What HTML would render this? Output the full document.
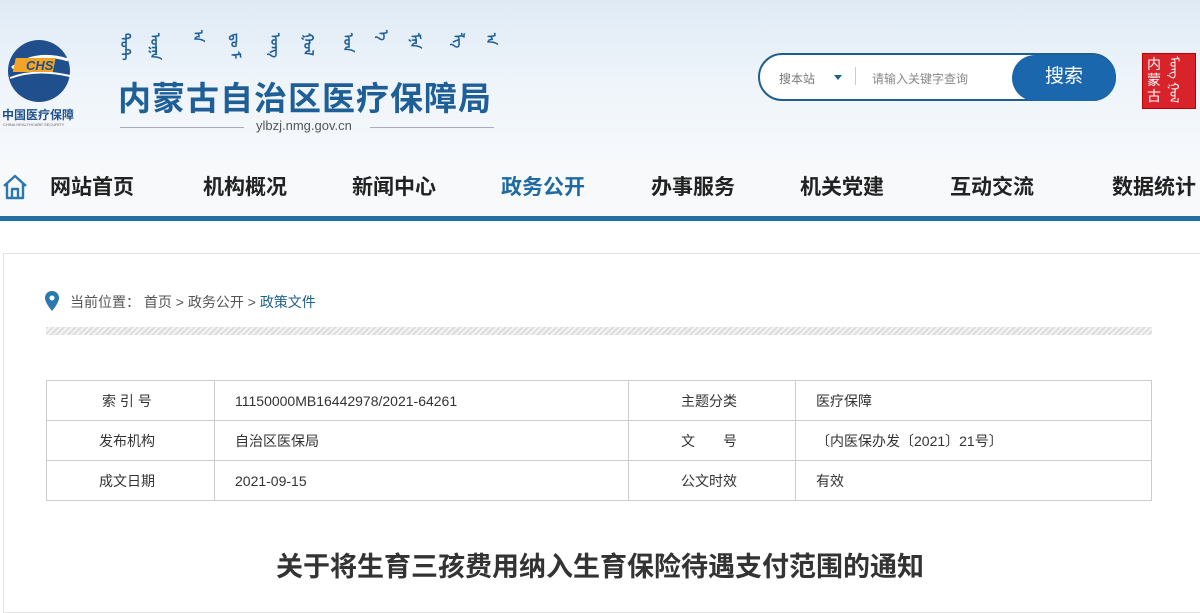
<!DOCTYPE html>
<html><head><meta charset="utf-8"><style>
*{margin:0;padding:0;box-sizing:border-box}
body{width:1200px;height:608px;overflow:hidden;background:#fff;font-family:"Liberation Sans","Noto Sans CJK SC",sans-serif;position:relative}
.hdr{position:absolute;left:0;top:0;width:1200px;height:160px;background:linear-gradient(180deg,#dfeaf5 0%,#eef4fa 50%,#f6f9fc 100%)}
.nav{position:absolute;top:160px;left:0;width:1200px;height:56px;background:#f7f9fb}
.navline{position:absolute;top:216px;left:0;width:1200px;height:5px;background:#2270a3}
.nav span{position:absolute;top:11px;font-size:21px;font-weight:bold;color:#222}
.abs{position:absolute}
.mg{position:absolute;top:33px;writing-mode:vertical-lr;font-size:13px;font-weight:bold;color:#1f5f97;line-height:10px}
.box{position:absolute;left:3px;top:253px;width:1197px;height:360px;border:1px solid #e3e3e3;border-right:none}
table{position:absolute;left:46px;top:380px;border-collapse:collapse;font-size:14px;color:#333}
td{border:1px solid #ccc;height:40px;padding:0 0 0 20px}
</style></head><body>
<div class="hdr"></div>
<svg class="abs" style="left:6px;top:38px" width="66" height="66" viewBox="0 0 66 66">
<circle cx="33" cy="33" r="31" fill="#1f4f8c"/>
<path d="M6 30 Q30 12 62 22" stroke="#fff" stroke-width="3" fill="none"/>
<path d="M4 40 Q30 30 64 38" stroke="#fff" stroke-width="2" fill="none"/>
<rect x="14" y="20" width="40" height="14" fill="#f2a428" transform="skewX(-12)"/>
<text x="20" y="32" font-size="13" font-weight="bold" fill="#1f4f8c" font-style="italic" font-family="Liberation Sans">CHS</text>
</svg>
<div class="abs" style="left:2px;top:106px;font-size:12px;font-weight:bold;color:#1f4f8c">中国医疗保障</div>
<div class="abs" style="left:3px;top:122px;font-size:4px;color:#666">CHINA HEALTHCARE SECURITY</div>
<div class="mg" style="left:120px">ᠳᠣᠲ</div><div class="mg" style="left:150px">ᠣᠭᠠ</div><div class="mg" style="left:193px;top:30px">ᠠ</div><div class="mg" style="left:230px">ᠳᠤ ᠮ</div><div class="mg" style="left:270px">ᠣᠩ</div><div class="mg" style="left:303px">ᠭᠣᠯ</div><div class="mg" style="left:343px">ᠤᠨ</div><div class="mg" style="left:378px;top:30px">ᠡ</div><div class="mg" style="left:410px">ᠮᠨᠡ</div><div class="mg" style="left:453px">ᠯᠭ</div><div class="mg" style="left:486px">ᠡᠨ</div>
<div class="abs" style="left:118px;top:72px;font-size:33px;font-weight:bold;color:#1f5f97;letter-spacing:1px">内蒙古自治区医疗保障局</div>
<div class="abs" style="left:120px;top:127px;width:124px;height:1px;background:#aab"></div>
<div class="abs" style="left:370px;top:127px;width:124px;height:1px;background:#aab"></div>
<div class="abs" style="left:256px;top:118px;font-size:13px;color:#555">ylbzj.nmg.gov.cn</div>
<div class="abs" style="left:758px;top:53px;width:358px;height:48px;border:2px solid #1f5f8c;border-radius:24px;background:#fff"></div>
<div class="abs" style="left:779px;top:70px;font-size:12px;color:#777">搜本站</div>
<div class="abs" style="left:834px;top:75px;width:0;height:0;border-left:4px solid transparent;border-right:4px solid transparent;border-top:5px solid #1f5f8c"></div>
<div class="abs" style="left:855px;top:67px;width:1px;height:18px;background:#ccc"></div>
<div class="abs" style="left:872px;top:70px;font-size:12px;color:#888">请输入关键字查询</div>
<div class="abs" style="left:1012px;top:55px;width:104px;height:46px;border-radius:23px;background:#1a67ae;color:#fff;font-size:19px;text-align:center;line-height:44px">搜索</div>
<div class="abs" style="left:1142px;top:53px;width:54px;height:56px;background:#d8232a;border:1px solid #b00"></div>
<div class="abs" style="left:1147px;top:56px;width:16px;font-size:14px;line-height:16px;color:#fff">内<br>蒙<br>古</div>
<div class="abs" style="left:1168px;top:56px;writing-mode:vertical-lr;font-size:12px;line-height:11px;color:#fff;height:50px">ᠮᠣᠩ ᠭᠣᠯ</div>
<div class="nav">
<svg class="abs" style="left:2px;top:14px" width="26" height="26" viewBox="0 0 26 26"><path d="M2 12 L13 2 L24 12 M5 10 V24 H21 V10 M10 24 V15 H16 V24" stroke="#2a78ad" stroke-width="2.4" fill="none" stroke-linejoin="round"/></svg>
<span style="left:50px">网站首页</span><span style="left:203px">机构概况</span><span style="left:352px">新闻中心</span><span style="left:501px;color:#1f6aa3">政务公开</span><span style="left:651px">办事服务</span><span style="left:800px">机关党建</span><span style="left:950px">互动交流</span><span style="left:1112px">数据统计</span>
</div>
<div class="navline"></div>
<div class="box"></div>
<svg class="abs" style="left:45px;top:291px" width="14" height="20" viewBox="0 0 14 20"><path d="M7 0 C3 0 0 3 0 7 C0 12 7 20 7 20 C7 20 14 12 14 7 C14 3 11 0 7 0 Z" fill="#2a78ad"/><circle cx="7" cy="7" r="2.5" fill="#fff"/></svg>
<div class="abs" style="left:70px;top:292px;font-size:14px;color:#555">当前位置： 首页 &gt; 政务公开 &gt; <span style="color:#1f5f8c">政策文件</span></div>
<div class="abs" style="left:46px;top:327px;width:1106px;height:8px;background:repeating-linear-gradient(135deg,#ddd 0 2px,#f4f4f4 2px 4px)"></div>
<table>
<tr><td style="width:168px;padding-left:55px">索 引 号</td><td style="width:414px">11150000MB16442978/2021-64261</td><td style="width:167px;padding-left:52px">主题分类</td><td style="width:356px">医疗保障</td></tr>
<tr><td style="padding-left:52px">发布机构</td><td>自治区医保局</td><td style="padding-left:52px">文　　号</td><td>〔内医保办发〔2021〕21号〕</td></tr>
<tr><td style="padding-left:52px">成文日期</td><td>2021-09-15</td><td style="padding-left:52px">公文时效</td><td>有效</td></tr>
</table>
<div class="abs" style="left:0;top:545px;width:1200px;text-align:center;font-size:27px;font-weight:bold;color:#333">关于将生育三孩费用纳入生育保险待遇支付范围的通知</div>
</body></html>
